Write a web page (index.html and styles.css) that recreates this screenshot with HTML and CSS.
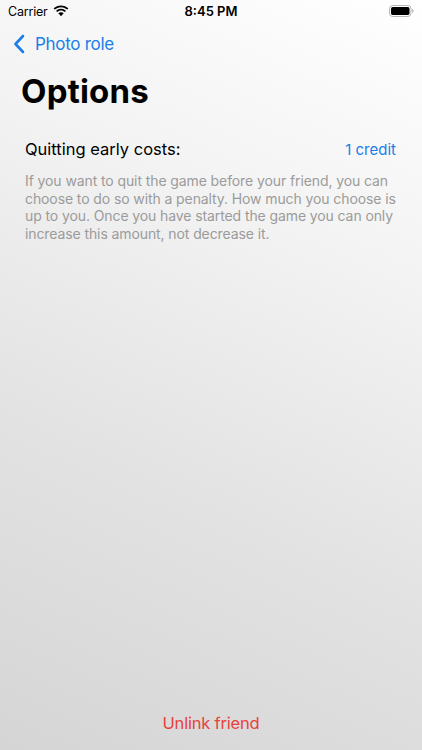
FILE: index.html
```html
<!DOCTYPE html>
<html>
<head>
<meta charset="utf-8">
<link rel="stylesheet" href="styles.css">
</head>
<body>
<div class="screen">
  <div class="status">
    <div class="status-left">
      <span class="carrier">Carrier</span>
      <svg class="wifi" width="16" height="12" viewBox="0 0 16 12">
        <path d="M8 2.2c2.4 0 4.6.9 6.2 2.4l1.2-1.3C13.4 1.4 10.8.4 8 .4S2.6 1.4.6 3.3l1.2 1.3C3.4 3.1 5.6 2.2 8 2.2z" fill="#000"/>
        <path d="M8 5.6c1.5 0 2.8.6 3.8 1.5l1.2-1.3C11.7 4.6 9.9 3.8 8 3.8s-3.7.8-5 2l1.2 1.3C5.2 6.2 6.5 5.6 8 5.6z" fill="#000"/>
        <path d="M8 9c.6 0 1.1.2 1.5.6L8 11.3 6.5 9.6C6.9 9.2 7.4 9 8 9zM8 7.2c1.1 0 2 .4 2.7 1.1L9.5 9.6C9.1 9.2 8.6 9 8 9s-1.1.2-1.5.6L5.3 8.3C6 7.6 6.9 7.2 8 7.2z" fill="#000"/>
      </svg>
    </div>
    <div class="time">8:45 PM</div>
    <div class="status-right">
      <svg class="battery" width="25" height="12" viewBox="0 0 25 12">
        <rect x="0.5" y="0.5" width="21.5" height="11" rx="3.2" fill="none" stroke="#b5b5b5" stroke-width="1"/>
        <rect x="2" y="2" width="18.5" height="8" rx="1.8" fill="#000"/>
        <path d="M23.2 4v4c.8-.3 1.3-1.1 1.3-2s-.5-1.7-1.3-2z" fill="#b5b5b5"/>
      </svg>
    </div>
  </div>

  <div class="nav">
    <svg class="chev" width="12" height="20" viewBox="0 0 12 20">
      <path d="M10 2L2.5 10 10 18" fill="none" stroke="#1a7fe8" stroke-width="2.6" stroke-linecap="round" stroke-linejoin="round"/>
    </svg>
    <span class="back">Photo role</span>
  </div>

  <h1 class="title">Options</h1>

  <div class="content">
    <div class="row">
      <span class="label">Quitting early costs:</span>
      <span class="value">1 credit</span>
    </div>
    <p class="desc">If you want to quit the game before your friend, you can choose to do so with a penalty. How much you choose is up to you. Once you have started the game you can only increase this amount, not decrease it.</p>
  </div>

  <div class="spacer"></div>

  <div class="footer">
    <span class="unlink">Unlink friend</span>
  </div>
</div>
</body>
</html>
```
FILE: styles.css
```css
html, body {
  margin: 0;
  padding: 0;
}
body {
  font-family: Inter, "Liberation Sans", sans-serif;
}
.screen {
  width: 422px;
  height: 750px;
  display: flex;
  flex-direction: column;
  background: linear-gradient(205deg, #ffffff 0%, #f3f3f3 30%, #e2e2e2 65%, #d5d5d5 100%);
  overflow: hidden;
}
.status {
  height: 22px;
  display: flex;
  align-items: center;
  justify-content: space-between;
  padding: 0 8px;
  position: relative;
}
.status-left {
  display: flex;
  align-items: center;
  gap: 5px;
}
.carrier {
  font-size: 12.5px;
  color: #000;
  letter-spacing: -0.2px;
}
.wifi {
  margin-top: -1px;
}
.time {
  position: absolute;
  left: 0;
  right: 0;
  text-align: center;
  font-size: 13px;
  font-weight: 600;
  color: #000;
}
.status-right {
  display: flex;
  align-items: center;
}
.nav {
  height: 44px;
  display: flex;
  align-items: center;
  padding-left: 13px;
  gap: 10px;
}
.back {
  font-size: 17px;
  color: #1a7fe8;
  letter-spacing: -0.3px;
}
.title {
  margin: 1px 0 0 21px;
  font-size: 33px;
  font-weight: 700;
  letter-spacing: 0.2px;
  color: #000;
  line-height: 48px;
}
.content {
  padding: 22px 26px 0 25px;
}
.row {
  display: flex;
  justify-content: space-between;
  align-items: center;
  height: 24px;
}
.label {
  font-size: 16.5px;
  color: #000;
  letter-spacing: 0;
}
.value {
  font-size: 15px;
  color: #1a7fe8;
}
.desc {
  margin: 11px 0 0 0;
  font-size: 14px;
  line-height: 17.5px;
  color: #9b9b9b;
  letter-spacing: -0.1px;
}
.spacer {
  flex: 1;
}
.footer {
  display: flex;
  justify-content: center;
  padding-bottom: 17px;
}
.unlink {
  font-size: 16.5px;
  color: #e8413a;
  letter-spacing: -0.2px;
}
```
